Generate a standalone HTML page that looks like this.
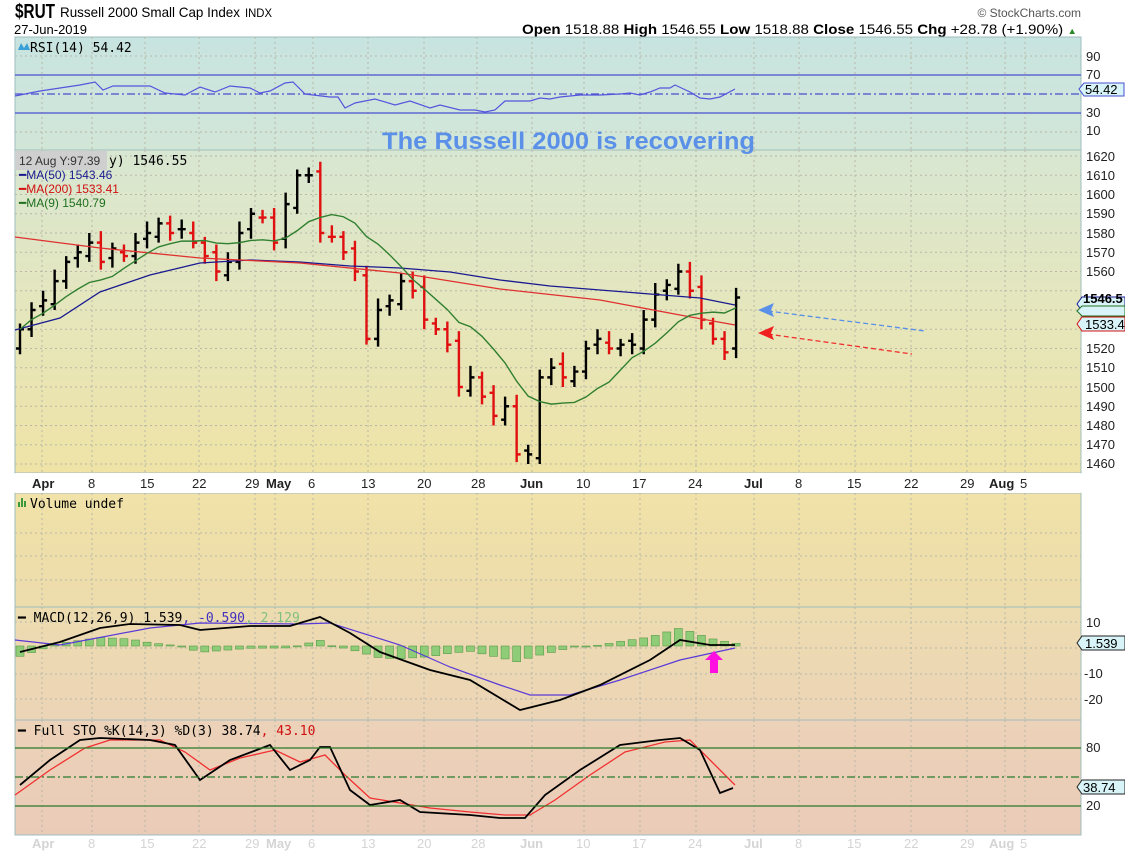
<!DOCTYPE html>
<html><head><meta charset="utf-8"><style>
body{margin:0;background:#fff;width:1125px;height:851px;overflow:hidden;font-family:"Liberation Sans",sans-serif}
svg{display:block}
</style></head><body>
<svg id="s" width="1125" height="851" xmlns="http://www.w3.org/2000/svg" font-family="Liberation Sans, sans-serif">
<defs>
<linearGradient id="gr" x1="0" y1="0" x2="0" y2="1"><stop offset="0" stop-color="#c8e4e0"/><stop offset="1" stop-color="#d2e6d8"/></linearGradient>
<linearGradient id="gp" x1="0" y1="0" x2="0" y2="1"><stop offset="0" stop-color="#d8e7d2"/><stop offset="0.5" stop-color="#e5e6bc"/><stop offset="1" stop-color="#efe3a6"/></linearGradient>
<linearGradient id="gv" x1="0" y1="0" x2="0" y2="1"><stop offset="0" stop-color="#f0e2a8"/><stop offset="1" stop-color="#eddcac"/></linearGradient>
<linearGradient id="gm" x1="0" y1="0" x2="0" y2="1"><stop offset="0" stop-color="#eddcb0"/><stop offset="1" stop-color="#ecd4b6"/></linearGradient>
<linearGradient id="gs" x1="0" y1="0" x2="0" y2="1"><stop offset="0" stop-color="#ecd2b8"/><stop offset="1" stop-color="#eacbb8"/></linearGradient>
</defs>
<text x="15" y="18" font-size="20" font-weight="bold" textLength="40" lengthAdjust="spacingAndGlyphs">$RUT</text>
<text x="60" y="17" font-size="14" textLength="180" lengthAdjust="spacingAndGlyphs">Russell 2000 Small Cap Index</text>
<text x="245" y="17" font-size="12" textLength="27" lengthAdjust="spacingAndGlyphs">INDX</text>
<text x="14" y="34" font-size="13">27-Jun-2019</text>
<text x="1081" y="17" font-size="12" fill="#555" text-anchor="end">© StockCharts.com</text>
<text x="522" y="34" font-size="14" textLength="555" lengthAdjust="spacingAndGlyphs"><tspan font-weight="bold">Open</tspan> 1518.88 <tspan font-weight="bold">High</tspan> 1546.55 <tspan font-weight="bold">Low</tspan> 1518.88 <tspan font-weight="bold">Close</tspan> 1546.55 <tspan font-weight="bold">Chg</tspan> +28.78 (+1.90%) <tspan fill="#2a8a2a" font-size="9">▲</tspan></text>

<rect x="15" y="37" width="1066" height="113" fill="url(#gr)" stroke="#9fbcbc"/>
<rect x="15" y="150" width="1066" height="323" fill="url(#gp)" stroke="#9fbcbc"/>
<rect x="15" y="493" width="1066" height="114" fill="url(#gv)" stroke="#9fbcbc"/>
<rect x="15" y="607" width="1066" height="113" fill="url(#gm)" stroke="#9fbcbc"/>
<rect x="15" y="720" width="1066" height="115" fill="url(#gs)" stroke="#9fbcbc"/>
<g id="grid" stroke="#b8b8a8" stroke-dasharray="2,3" stroke-width="1"></g>
<g id="content"></g>

<text x="30" y="52" font-size="13" font-family="DejaVu Sans Mono, monospace">RSI(14) 54.42</text>
<path d="M18 50 l3 -7 l3 5 l3 -5 l3 7z" fill="#3aa0d8"/>
<line x1="15" y1="75" x2="1081" y2="75" stroke="#4a50d0" stroke-width="1.3"/>
<line x1="15" y1="113" x2="1081" y2="113" stroke="#4a50d0" stroke-width="1.3"/>
<line x1="15" y1="94" x2="1081" y2="94" stroke="#4a50d0" stroke-width="1.3" stroke-dasharray="8,3,2,3"/>
<polyline fill="none" stroke="#5555dd" stroke-width="1.2" points="15,96 40,91 60,88 80,85 95,82 103,90 113,86 150,86 165,93 185,95 200,87 215,92 230,86 250,88 260,93 270,91 285,83 293,82 305,94 330,97 338,97 345,108 355,103 375,99 395,105 410,101 430,108 440,105 460,110 475,110 485,112 495,110 505,101 530,101 540,98 550,99 560,97 580,95 590,95 600,95 620,94 630,93 640,95 650,92 660,88 670,88 675,85 690,92 700,98 710,99 720,97 735,89"/>
<text x="382" y="149" font-size="24" font-weight="bold" fill="#5a90e8" textLength="373" lengthAdjust="spacingAndGlyphs">The Russell 2000 is recovering</text>

<rect x="15" y="151" width="92" height="19" fill="#cfcfcf"/>
<text x="19" y="165" font-size="12" fill="#333">12 Aug Y:97.39</text>
<text x="109" y="165" font-size="13" font-family="DejaVu Sans Mono, monospace">y) 1546.55</text>
<text x="19" y="179" font-size="12" fill="#1a1a90"><tspan>━</tspan>MA(50) 1543.46</text>
<text x="19" y="193" font-size="12" fill="#d01010"><tspan>━</tspan>MA(200) 1533.41</text>
<text x="19" y="207" font-size="12" fill="#207020"><tspan>━</tspan>MA(9) 1540.79</text>

<rect x="15" y="473" width="1066" height="20" fill="#fff"/>
<g font-size="13" fill="#222">
<text x="32" y="488" font-weight="bold">Apr</text><text x="88" y="488">8</text><text x="140" y="488">15</text><text x="192" y="488">22</text><text x="245" y="488">29</text><text x="266" y="488" font-weight="bold">May</text><text x="308" y="488">6</text><text x="361" y="488">13</text><text x="417" y="488">20</text><text x="471" y="488">28</text><text x="520" y="488" font-weight="bold">Jun</text><text x="576" y="488">10</text><text x="632" y="488">17</text><text x="688" y="488">24</text><text x="744" y="488" font-weight="bold">Jul</text><text x="795" y="488">8</text><text x="847" y="488">15</text><text x="904" y="488">22</text><text x="960" y="488">29</text><text x="989" y="488" font-weight="bold">Aug</text><text x="1020" y="488">5</text>
</g>
<g font-size="13" fill="#d4d4d4">
<text x="32" y="848" font-weight="bold">Apr</text><text x="88" y="848">8</text><text x="140" y="848">15</text><text x="192" y="848">22</text><text x="245" y="848">29</text><text x="266" y="848" font-weight="bold">May</text><text x="308" y="848">6</text><text x="361" y="848">13</text><text x="417" y="848">20</text><text x="471" y="848">28</text><text x="520" y="848" font-weight="bold">Jun</text><text x="576" y="848">10</text><text x="632" y="848">17</text><text x="688" y="848">24</text><text x="744" y="848" font-weight="bold">Jul</text><text x="795" y="848">8</text><text x="847" y="848">15</text><text x="904" y="848">22</text><text x="960" y="848">29</text><text x="989" y="848" font-weight="bold">Aug</text><text x="1020" y="848">5</text>
</g>

<path d="M18 507 h2 v-5 h-2z M21 507 h2 v-9 h-2z M24 507 h2 v-6 h-2z" fill="#3a9a3a"/>
<text x="30" y="508" font-size="13" font-family="DejaVu Sans Mono, monospace">Volume undef</text>

<text x="18" y="622" font-size="13" font-family="DejaVu Sans Mono, monospace"><tspan>━ MACD(12,26,9) 1.539</tspan><tspan fill="#4030c0">, -0.590</tspan><tspan fill="#80c080">, 2.129</tspan></text>
<text x="18" y="735" font-size="13" font-family="DejaVu Sans Mono, monospace"><tspan>━ Full STO %K(14,3) %D(3) 38.74</tspan><tspan fill="#d01010">, 43.10</tspan></text>

<line x1="15" y1="748" x2="1081" y2="748" stroke="#2a7a2a" stroke-width="1.2"/>
<line x1="15" y1="806" x2="1081" y2="806" stroke="#2a7a2a" stroke-width="1.2"/>
<line x1="15" y1="777" x2="1081" y2="777" stroke="#2a7a2a" stroke-width="1.2" stroke-dasharray="8,3,2,3"/>

<g fill="none" stroke-width="1.3">
<path d="M760 310 L925 331" stroke="#5a90e8" stroke-dasharray="5,3"/>
<path d="M760 333 L912 354" stroke="#f03030" stroke-dasharray="5,3"/>
</g>
<path d="M758 310 l16 -7 l-3 7 l3 7z" fill="#5a90e8"/>
<path d="M758 333 l16 -7 l-3 7 l3 7z" fill="#f02020"/>
<path d="M714 651 l-9 9 h5 v13 h8 v-13 h5z" fill="#ff10e0"/>

<g font-size="13" fill="#222">
<text x="1086" y="61">90</text><text x="1086" y="79">70</text><text x="1086" y="117">30</text><text x="1086" y="135">10</text>
<text x="1086" y="161">1620</text><text x="1086" y="180">1610</text><text x="1086" y="199">1600</text><text x="1086" y="218">1590</text><text x="1086" y="238">1580</text><text x="1086" y="257">1570</text><text x="1086" y="276">1560</text><text x="1086" y="353">1520</text><text x="1086" y="372">1510</text><text x="1086" y="392">1500</text><text x="1086" y="411">1490</text><text x="1086" y="430">1480</text><text x="1086" y="449">1470</text><text x="1086" y="468">1460</text>
<text x="1086" y="627">10</text><text x="1084" y="678">-10</text><text x="1084" y="704">-20</text>
<text x="1086" y="752">80</text><text x="1086" y="810">20</text>
</g>
<g font-size="13">
<path d="M1079 89 l5 -6 h40 v13 h-40z" fill="#d8f4f8" stroke="#4a50d0"/><text x="1085" y="94">54.42</text>
<path d="M1077 304 l5 -7 h43 v14 h-43z" fill="#d8f4f8" stroke="#1a1a90"/><text x="1083" y="303" font-weight="bold">1546.5</text>
<path d="M1077 311 l5 -5 h43 v10 h-43z" fill="#d8f4f8" stroke="#207020"/>
<path d="M1077 324 l5 -7 h43 v14 h-43z" fill="#d8f4f8" stroke="#d01010"/><text x="1085" y="329">1533.4</text>
<path d="M1077 643 l5 -7 h43 v14 h-43z" fill="#d8f4f8" stroke="#222"/><text x="1085" y="648">1.539</text>
<path d="M1077 787 l5 -7 h43 v14 h-43z" fill="#d8f4f8" stroke="#222"/><text x="1083" y="792">38.74</text>
</g>
</svg>
<script>
var NS="http://www.w3.org/2000/svg",c=document.getElementById("content"),g=document.getElementById("grid");
function el(t,a,p){var e=document.createElementNS(NS,t);for(var k in a)e.setAttribute(k,a[k]);(p||c).appendChild(e);return e;}
[42,92,145,199,255,275,313,368,424,477,532,584,640,696,754,799,855,911,967,1005,1025].forEach(function(x){[[37,150],[150,473],[493,607],[607,720],[720,835]].forEach(function(r){el("line",{x1:x,x2:x,y1:r[0],y2:r[1]},g);});});
for(var p=1460;p<=1620;p+=10){var y=156+(1620-p)*1.925;el("line",{x1:15,x2:1081,y1:y,y2:y},g);}
[533,556,580].forEach(function(y){el("line",{x1:15,x2:1081,y1:y,y2:y},g);});
[622,648,674,699].forEach(function(y){el("line",{x1:15,x2:1081,y1:y,y2:y},g);});
[56,132].forEach(function(y){el("line",{x1:15,x2:1081,y1:y,y2:y},g);});
var C=[1530,1540,1545,1555,1565,1570,1575,1565,1572,1568,1575,1580,1585,1580,1582,1575,1568,1560,1565,1580,1590,1588,1575,1595,1610,1610,1580,1578,1570,1560,1525,1540,1545,1555,1550,1535,1530,1522,1500,1505,1495,1485,1490,1465,1465,1505,1510,1505,1508,1520,1525,1520,1522,1522,1535,1548,1553,1560,1550,1535,1525,1518,1546.5];
function Y(p){return 156+(1620-p)*1.925;}
function X(i){return 20+i*11.55;}
for(var i=0;i<C.length;i++){var o=i?C[i-1]+(i%3-1)*2:1520,cl=C[i],h=Math.max(o,cl)+3+(i%4),l=Math.min(o,cl)-3-(i%3);
var col=(i&&cl<C[i-1])?"#e01010":"#000";var x=X(i);
el("path",{d:"M"+x+" "+Y(h)+"V"+Y(l)+"M"+(x-4)+" "+Y(o)+"H"+x+"M"+x+" "+Y(cl)+"H"+(x+4),stroke:col,"stroke-width":2.4,fill:"none"});}
var m9=[];for(i=0;i<C.length;i++){var s=0,n=0;for(var j=Math.max(0,i-8);j<=i;j++){s+=C[j];n++;}m9.push(X(i)+","+Y(s/n));}
el("polyline",{points:"15,330 60,318 100,292 150,275 200,263 250,260 300,262 350,266 400,268 450,272 500,280 550,286 600,290 650,294 700,298 735,305",fill:"none",stroke:"#1a1a90","stroke-width":1.3});
el("polyline",{points:"15,237 100,248 200,258 300,263 400,273 500,289 600,300 680,315 735,325",fill:"none",stroke:"#e03030","stroke-width":1.3});
el("polyline",{points:m9.join(" "),fill:"none",stroke:"#308030","stroke-width":1.4});
var M=[[20,652],[60,642],[100,628],[130,624],[180,625],[200,630],[250,626],[290,626],[320,617],[350,633],[380,652],[430,670],[470,680],[520,710],[560,700],[600,685],[650,660],[680,640],[710,645],[735,645]];
var S=[[15,640],[60,645],[150,628],[200,623],[300,624],[330,623],[400,645],[450,667],[500,685],[530,695],[570,695],[620,680],[680,660],[735,648]];
function interp(a,x){for(var k=0;k<a.length-1;k++)if(x>=a[k][0]&&x<=a[k+1][0]){var t=(x-a[k][0])/(a[k+1][0]-a[k][0]);return a[k][1]+t*(a[k+1][1]-a[k][1]);}return a[a.length-1][1];}
for(i=0;i<C.length;i++){var x=X(i),d=(interp(S,x)-interp(M,x))*0.9,z=646;var y1=Math.min(z,z-d),hh=Math.max(1,Math.abs(d));el("rect",{x:x-4,y:y1,width:8,height:hh,fill:"#8fcc78",stroke:"#5a9a4a","stroke-width":0.6});}
el("polyline",{points:S.map(function(p){return p.join(",")}).join(" "),fill:"none",stroke:"#5a3ad8","stroke-width":1.2});
el("polyline",{points:M.map(function(p){return p.join(",")}).join(" "),fill:"none",stroke:"#000","stroke-width":1.8});
var K="20,785 50,760 80,740 100,738 150,740 175,745 200,780 230,760 270,745 290,770 310,760 320,747 330,747 350,790 370,805 400,800 420,812 470,815 500,818 525,818 545,795 580,770 620,745 660,740 680,738 700,750 720,793 733,788";
var D="15,795 50,770 85,748 110,740 160,740 185,752 210,770 240,758 275,750 300,762 325,755 345,775 370,798 400,803 430,808 470,812 505,815 530,815 555,800 590,775 625,752 665,742 690,740 710,760 735,785";
el("polyline",{points:D,fill:"none",stroke:"#f03030","stroke-width":1.3});
el("polyline",{points:K,fill:"none",stroke:"#000","stroke-width":1.8});
</script>
</body></html>
